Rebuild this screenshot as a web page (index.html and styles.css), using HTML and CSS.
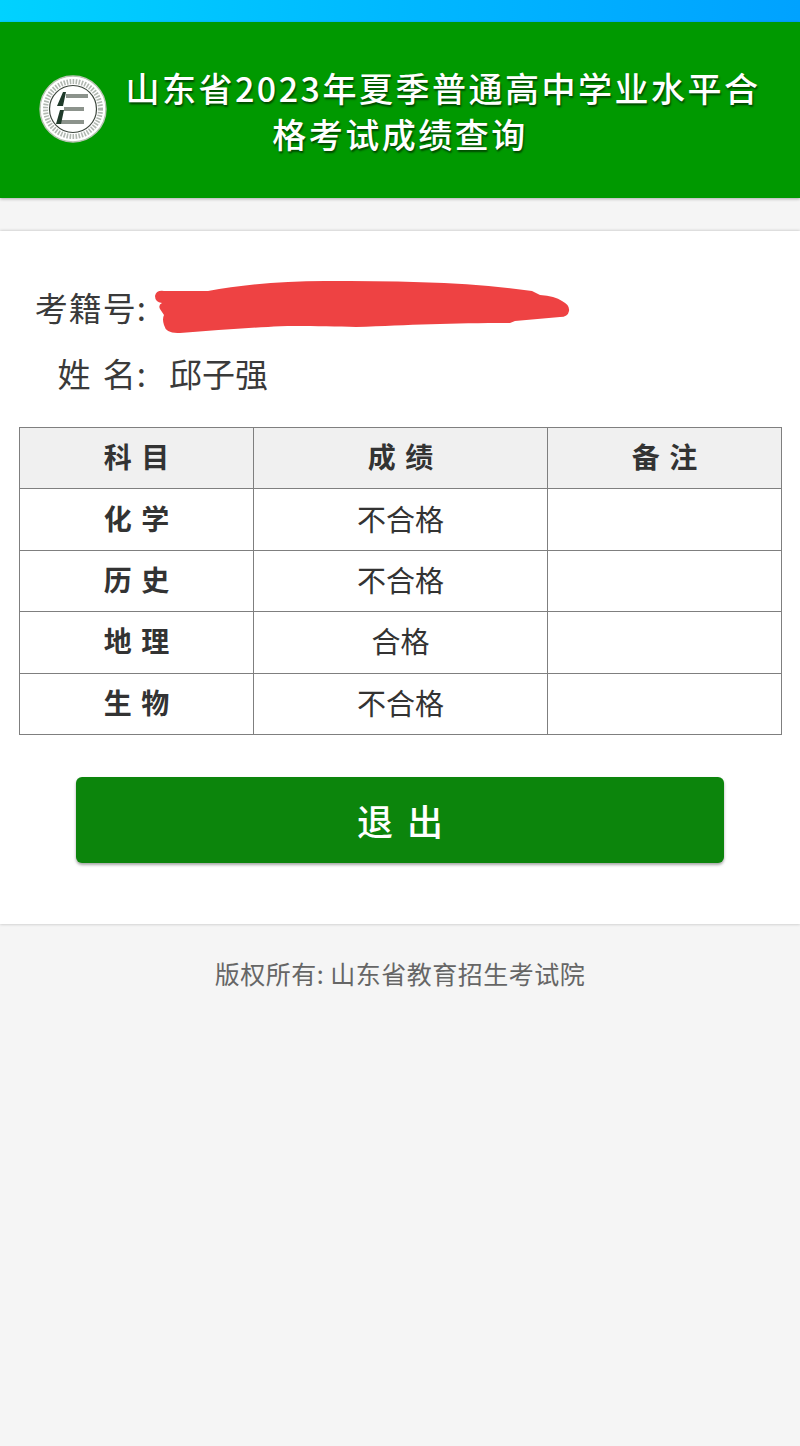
FILE: index.html
```html
<!DOCTYPE html>
<html lang="zh-CN">

<head>
    <meta charset="UTF-8">
    <meta name="viewport" content="width=device-width, initial-scale=1.0">
    <title>山东省2023年夏季普通高中学业水平合格考试成绩查询</title>
    <link rel="stylesheet" href="styles.css">
</head>

<body>

    <div class="status-bar"></div>

    <div class="header">
        <h1 class="title">
            <svg class="logo" viewBox="0 0 68 68" aria-hidden="true">
                <circle cx="34" cy="34" r="33" fill="#fff" stroke="#b9c4b4" stroke-width="1.4" />
                <circle cx="34" cy="34" r="27.5" fill="none" stroke="#7d897d" stroke-width="5" stroke-dasharray="1.6 1.4" opacity="0.6" />
                <circle cx="34" cy="34" r="23.5" fill="#fff" stroke="#3c463c" stroke-width="1.2" />
                <path d="M27 19h22v4H27zM25 32h20v4H25zM22 45h23v4H22z" fill="#8c938c" />
                <path d="M24 17l3 0-3 14-6 0zM21 35l4 0-3 14-5 0z" fill="#1f3a2a" />
            </svg>山东省2023年夏季普通高中学业水平合<br>格考试成绩查询
        </h1>
    </div>

    <div class="card">
        <div class="info-row">
            <span class="info-label">考籍号:</span>
            <svg class="redaction" viewBox="0 0 430 56" aria-hidden="true">
                <path d="M5 17Q6 11 14 12L58 12C90 6 130 2 175 2C250 2 320 3 382 12L390 16Q405 17 412 22Q420 26 419 32Q418 38 410 38L365 42L360 44C300 44 260 46 206 48C180 48 140 46 118 48C90 49 60 52 30 54Q16 55 14 46Q12 40 14 36L10 30Q8 26 12 24Q5 23 5 17Z" fill="#ee4243" />
            </svg>
        </div>
        <div class="info-row">
            <span class="info-label">姓 名:</span>
            <span class="info-value">邱子强</span>
        </div>

        <table class="score-table">
            <tr>
                <th class="col-subject">科 目</th>
                <th class="col-score">成 绩</th>
                <th class="col-note">备 注</th>
            </tr>
            <tr>
                <td class="subject">化 学</td>
                <td>不合格</td>
                <td></td>
            </tr>
            <tr>
                <td class="subject">历 史</td>
                <td>不合格</td>
                <td></td>
            </tr>
            <tr>
                <td class="subject">地 理</td>
                <td>合格</td>
                <td></td>
            </tr>
            <tr>
                <td class="subject">生 物</td>
                <td>不合格</td>
                <td></td>
            </tr>
        </table>

        <button class="logout" type="button">退 出</button>
    </div>

    <p class="copyright">版权所有: 山东省教育招生考试院</p>

</body>

</html>
```

FILE: styles.css
```css
body {
    margin: 0;
    background: #f5f5f5;
    font-family: "Noto Sans CJK SC", "Noto Sans", sans-serif;
    color: #333;
}

.status-bar {
    height: 22px;
    background: linear-gradient(90deg, #00d2ff, #00b8ff 50%, #00a2ff);
}

.header {
    height: 176px;
    padding-top: 43px;
    box-sizing: border-box;
    background: #009900;
    box-shadow: 0 1px 3px rgba(0, 0, 0, 0.3);
}

.title {
    margin: 0;
    text-align: center;
    font-size: 34px;
    font-weight: 500;
    line-height: 46px;
    letter-spacing: 2.5px;
    color: #fff;
    text-shadow: 1px 2px 2px rgba(0, 0, 0, 0.55);
}

.logo {
    width: 68px;
    height: 68px;
    margin-right: 18px;
    margin-bottom: -35px;
    vertical-align: -6px;
}

.card {
    margin-top: 33px;
    height: 693px;
    padding-top: 44px;
    box-sizing: border-box;
    background: #fff;
    box-shadow: 0 0 3px rgba(0, 0, 0, 0.25);
}

.info-row {
    position: relative;
    display: flex;
    align-items: center;
    height: 66px;
    padding-bottom: 2px;
    box-sizing: border-box;
    font-size: 33px;
    color: #3a3a3a;
}

.info-label {
    width: 147px;
    text-align: right;
    white-space: nowrap;
    letter-spacing: 1px;
    word-spacing: 3px;
}

.info-value {
    margin-left: 22px;
}

.redaction {
    position: absolute;
    left: 150px;
    top: 4px;
    width: 430px;
    height: 56px;
}

.score-table {
    width: 762px;
    margin: 20px 19px 0;
    table-layout: fixed;
    border-collapse: collapse;
    font-size: 29px;
    color: #333;
}

.score-table th,
.score-table td {
    height: 61.4px;
    padding: 0 0 4px;
    box-sizing: border-box;
    border: 1px solid #7f7f7f;
    text-align: center;
}

.score-table th {
    background: #f0f0f0;
    font-size: 28px;
    font-weight: 700;
    word-spacing: 3px;
}

.col-subject,
.col-note {
    width: 234px;
}

.col-score {
    width: 294px;
}

.score-table .subject {
    font-size: 28px;
    font-weight: 700;
    word-spacing: 3px;
}

.logout {
    display: block;
    width: 648px;
    height: 86px;
    margin: 42px auto 0;
    padding: 0;
    border: none;
    border-radius: 6px;
    background: #0c850c;
    box-shadow: 0 2px 3px rgba(0, 0, 0, 0.35);
    color: #fff;
    font-family: inherit;
    font-size: 36px;
    font-weight: 500;
    word-spacing: 6px;
}

.copyright {
    margin: 29px 0 0;
    text-align: center;
    font-size: 25px;
    line-height: 40px;
    letter-spacing: 0.5px;
    color: #666;
}
```
